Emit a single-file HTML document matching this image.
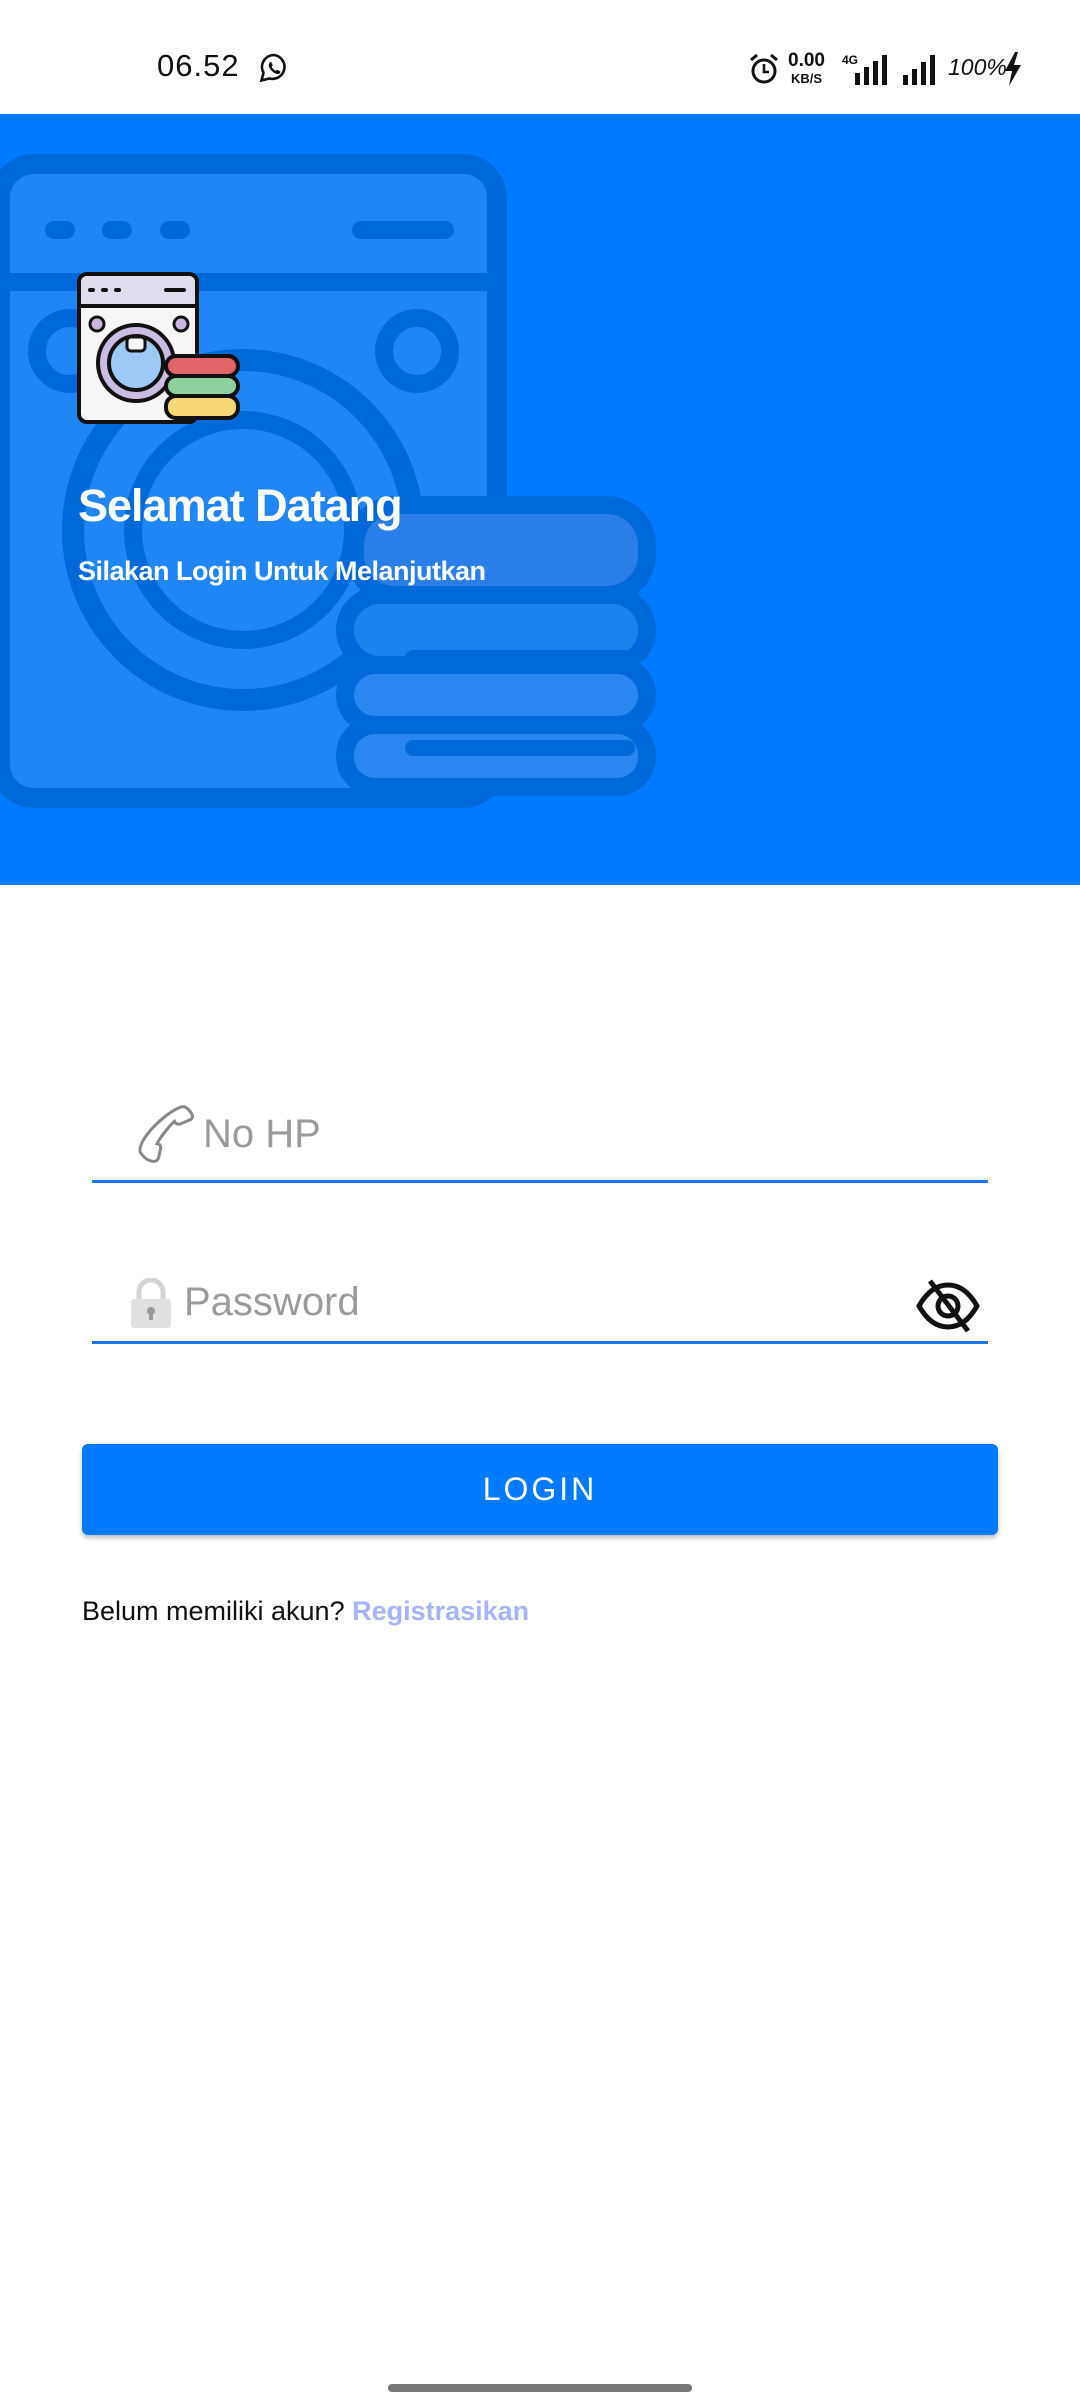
<!DOCTYPE html>
<html><head><meta charset="utf-8"><style>
*{margin:0;padding:0;box-sizing:border-box}
body{width:1080px;height:2400px;background:#fff;position:relative;overflow:hidden;font-family:"Liberation Sans",sans-serif}
.abs{position:absolute}
</style></head><body>
<!-- status bar -->
<div class="abs" style="left:157px;top:48px;font-size:31px;color:#111;letter-spacing:1px">06.52</div>
<svg class="abs" style="left:258px;top:52px" width="32" height="32" viewBox="0 0 32 32"><path d="M16 3a12 12 0 0 0-10.5 17.8L3.5 28.5l7.9-2A12 12 0 1 0 16 3z" fill="none" stroke="#111" stroke-width="2.6"/><path d="M11.5 10.5c.8-.8 1.8-.6 2.2.3l.9 2c.2.6 0 1-.5 1.5-.4.4-.3.8.1 1.5a8 8 0 0 0 2.6 2.6c.6.4 1 .4 1.4 0 .5-.5 1-.7 1.6-.4l1.9 1c.8.4.9 1.4.2 2.1-1.4 1.4-3.8 1.3-6.6-.8a14 14 0 0 1-3.7-4.2c-1.2-2.3-1-4.4-.1-5.3z" fill="#111"/></svg>
<svg class="abs" style="left:748px;top:52px" width="32" height="34" viewBox="0 0 32 34"><circle cx="16" cy="19" r="11" fill="none" stroke="#111" stroke-width="3"/><path d="M16 12v8h5" fill="none" stroke="#111" stroke-width="2.6"/><path d="M3 8l6-5M29 8l-6-5" stroke="#111" stroke-width="3"/></svg>
<div class="abs" style="left:788px;top:52px;font-size:19px;font-weight:bold;color:#111;line-height:17px;text-align:center">0.00<br><span style="font-size:13px">KB/S</span></div>
<div class="abs" style="left:842px;top:53px;font-size:12px;font-weight:bold;color:#111">4G</div>
<svg class="abs" style="left:855px;top:55px" width="36" height="30"><rect x="0" y="18" width="5" height="12" fill="#111"/><rect x="9" y="12" width="5" height="18" fill="#111"/><rect x="18" y="6" width="5" height="24" fill="#111"/><rect x="27" y="0" width="5" height="30" fill="#111"/></svg>
<svg class="abs" style="left:903px;top:55px" width="36" height="30"><rect x="0" y="20" width="5" height="10" fill="#111"/><rect x="9" y="14" width="5" height="16" fill="#111"/><rect x="18" y="7" width="5" height="23" fill="#111"/><rect x="27" y="0" width="5" height="30" fill="#111"/></svg>
<div class="abs" style="left:948px;top:54px;font-size:23px;color:#111;font-style:italic">100%</div>
<svg class="abs" style="left:1004px;top:52px" width="18" height="34"><path d="M11 0L1 19h7l-3 15 12-21h-7l4-13z" fill="#111"/></svg>

<!-- header -->
<div class="abs" style="left:0;top:114px;width:1080px;height:771px;background:#007bff;overflow:hidden">
<svg width="1080" height="771" class="abs" style="left:0;top:0">
<g transform="translate(0,-114)">
<rect x="0" y="164" width="497" height="634" rx="34" fill="#2086f5" stroke="#0069d9" stroke-width="20"/>
<line x1="0" y1="282" x2="497" y2="282" stroke="#0069d9" stroke-width="18"/>
<g fill="#0069d9"><rect x="45" y="221" width="30" height="18" rx="9"/><rect x="102" y="221" width="30" height="18" rx="9"/><rect x="160" y="221" width="30" height="18" rx="9"/><rect x="352" y="221" width="102" height="18" rx="9"/></g>
<circle cx="417" cy="351" r="33" fill="none" stroke="#0069d9" stroke-width="18"/>
<circle cx="70" cy="351" r="33" fill="none" stroke="#0069d9" stroke-width="18"/>
<circle cx="243" cy="530" r="170" fill="none" stroke="#0069d9" stroke-width="22"/>
<circle cx="243" cy="530" r="110" fill="none" stroke="#0069d9" stroke-width="18"/>
<rect x="355" y="505" width="292" height="90" rx="40" fill="#2a7ee8" stroke="#0069d9" stroke-width="18"/>
<rect x="345" y="595" width="302" height="70" rx="35" fill="#1b82ee" stroke="#0069d9" stroke-width="18"/>
<rect x="345" y="665" width="302" height="60" rx="30" fill="#2a86f0" stroke="#0069d9" stroke-width="18"/>
<rect x="345" y="725" width="302" height="62" rx="30" fill="#2a86f0" stroke="#0069d9" stroke-width="18"/>
<g fill="#0069d9"><rect x="405" y="650" width="230" height="16" rx="8"/><rect x="405" y="740" width="230" height="16" rx="8"/></g>
</g>
</svg>
<!-- small icon -->
<svg class="abs" style="left:76px;top:157px" width="166" height="156" viewBox="0 0 166 156">
<rect x="3" y="3" width="118" height="148" rx="8" fill="#f7f5f6" stroke="#111" stroke-width="4"/>
<rect x="5" y="5" width="114" height="30" rx="6" fill="#e2dcef"/><line x1="3" y1="35" x2="121" y2="35" stroke="#111" stroke-width="4"/>
<g fill="#111"><rect x="12" y="17" width="7" height="4" rx="2"/><rect x="25" y="17" width="7" height="4" rx="2"/><rect x="38" y="17" width="7" height="4" rx="2"/><rect x="88" y="17" width="22" height="4" rx="2"/></g>
<circle cx="21" cy="53" r="7" fill="#c9b7e0" stroke="#111" stroke-width="3"/><circle cx="105" cy="53" r="7" fill="#c9b7e0" stroke="#111" stroke-width="3"/>
<circle cx="60" cy="92" r="38" fill="#cbbce3" stroke="#111" stroke-width="4"/>
<circle cx="60" cy="92" r="27" fill="#9ec9f7" stroke="#111" stroke-width="4"/>
<rect x="51" y="66" width="18" height="14" rx="4" fill="#f7f5f6" stroke="#111" stroke-width="3"/>
<rect x="90" y="85" width="72" height="20" rx="10" fill="#e06468" stroke="#111" stroke-width="4"/>
<rect x="90" y="105" width="72" height="20" rx="10" fill="#8fd19e" stroke="#111" stroke-width="4"/>
<rect x="90" y="125" width="72" height="22" rx="10" fill="#f7d774" stroke="#111" stroke-width="4"/>
</svg>
<div class="abs" style="left:78px;top:366px;font-size:45px;font-weight:bold;color:#fff;letter-spacing:-1px">Selamat Datang</div>
<div class="abs" style="left:78px;top:442px;font-size:27px;font-weight:bold;color:#fff;letter-spacing:-0.5px">Silakan Login Untuk Melanjutkan</div>
</div>

<!-- phone field -->
<svg class="abs" style="left:128px;top:1102px" width="66" height="66" viewBox="0 0 66 66"><path d="M50 3c4-2 9 2 12 7 1 2 0 4-2 5l-9 5c-3 1-5 0-6-2-4 4-13 18-15 24 2 0 4 1 4 4l-1 10c-1 3-3 4-5 4-6 0-10-3-14-8C10 40 35 10 50 3z" fill="none" stroke="#888" stroke-width="3" transform="rotate(6 33 33)"/></svg>
<div class="abs" style="left:203px;top:1112px;font-size:40px;color:#9a9a9a">No HP</div>
<div class="abs" style="left:92px;top:1180px;width:896px;height:3px;background:#1a7ae8"></div>

<!-- password -->
<svg class="abs" style="left:130px;top:1278px" width="42" height="50" viewBox="0 0 42 50"><path d="M9 22V14a12 12 0 0 1 24 0v8" fill="none" stroke="#d4d4d4" stroke-width="5"/><rect x="1" y="21" width="40" height="29" rx="3" fill="#e0e0e0"/><circle cx="21" cy="33" r="4" fill="#999"/><rect x="19" y="34" width="4" height="8" fill="#999"/></svg>
<div class="abs" style="left:184px;top:1280px;font-size:40px;color:#9a9a9a">Password</div>
<svg class="abs" style="left:916px;top:1278px" width="64" height="56" viewBox="0 0 64 56"><path d="M3 28C12 12 22 7 32 7s20 5 29 21c-9 16-19 21-29 21S12 44 3 28z" fill="none" stroke="#111" stroke-width="5"/><circle cx="32" cy="28" r="10" fill="none" stroke="#111" stroke-width="5"/><line x1="14" y1="3" x2="52" y2="53" stroke="#111" stroke-width="5"/></svg>
<div class="abs" style="left:92px;top:1341px;width:896px;height:3px;background:#1a7ae8"></div>

<!-- button -->
<div class="abs" style="left:82px;top:1444px;width:916px;height:91px;background:#007bff;border-radius:6px;box-shadow:0 3px 5px rgba(0,0,0,0.25);color:#fff;font-size:32px;text-align:center;line-height:91px;letter-spacing:3px">LOGIN</div>

<div class="abs" style="left:82px;top:1596px;font-size:27px;color:#111">Belum memiliki akun? <span style="color:#a6b3ff;font-weight:bold">Registrasikan</span></div>

<div class="abs" style="left:388px;top:2384px;width:304px;height:8px;border-radius:4px;background:#777"></div>
</body></html>
